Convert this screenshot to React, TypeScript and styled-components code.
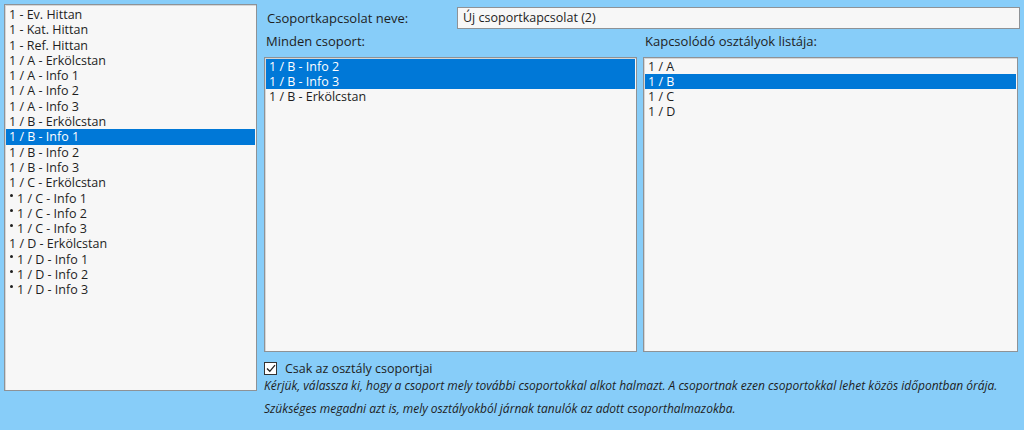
import styled, { createGlobalStyle } from 'styled-components'

const GlobalStyle = createGlobalStyle`
    html, body {
        margin: 0;
        padding: 0;
        background: #87cdf9;
    }
    body {
        font-family: 'Open Sans', 'Noto Sans', sans-serif;
        color: #1e1e1e;
    }
`

const Window = styled.div`
    width: 1024px;
    height: 430px;
    box-sizing: border-box;
    padding: 4px 4px 0 4px;
    display: flex;
    gap: 7px;
    background: #87cdf9;
    overflow: hidden;
`

const ListBox = styled.div<{ $rowHeight: number }>`
    box-sizing: border-box;
    background: #f7f7f7;
    border: 1px solid #8e9296;
    box-shadow: inset 1px 1px 0 #d6d6d6;
    padding: 2px 1px;
    overflow: hidden;
    font-size: 12.5px;
    line-height: ${(p) => p.$rowHeight}px;
`

const SideList = styled(ListBox)`
    width: 253px;
    height: 387px;
    flex: none;
`

const Row = styled.div<{ $selected?: boolean }>`
    padding-left: 3px;
    white-space: nowrap;
    background: ${(p) => (p.$selected ? '#0078d7' : 'transparent')};
    color: ${(p) => (p.$selected ? '#ffffff' : '#1e1e1e')};
`

const Bullet = styled.span`
    display: inline-block;
    width: 3px;
    height: 3px;
    border-radius: 50%;
    background: #1e1e1e;
    margin: 0 4px 0 1px;
    vertical-align: 6px;
`

const Main = styled.div`
    flex: 1;
    display: flex;
    flex-direction: column;
    padding-top: 3px;
`

const NameRow = styled.div`
    display: flex;
    align-items: center;
    padding-left: 3px;
    height: 22px;
`

const Label = styled.div`
    font-size: 13px;
    color: #1e1e1e;
    white-space: nowrap;
`

const NameLabel = styled(Label)`
    width: 190px;
`

const NameInput = styled.div`
    flex: 1;
    height: 22px;
    box-sizing: border-box;
    background: #f7f7f7;
    border: 1px solid #8e9296;
    padding: 0 5px;
    font-size: 12.5px;
    line-height: 20px;
`

const Columns = styled.div`
    display: grid;
    grid-template-columns: 373px 375px;
    column-gap: 6px;
    margin-top: 2px;
`

const Column = styled.div`
    display: flex;
    flex-direction: column;
`

const ColumnLabel = styled(Label)`
    height: 20px;
    line-height: 20px;
    padding-left: 2px;
    margin-bottom: 6px;
`

const PickList = styled(ListBox)`
    height: 295px;
    padding: 1px 1px;
`

const CheckRow = styled.label`
    display: flex;
    align-items: center;
    gap: 8px;
    margin-top: 9px;
    padding-left: 0;
    font-size: 12.5px;
    height: 14px;
`

const CheckBox = styled.span`
    width: 11px;
    height: 11px;
    border: 1px solid #333;
    background: #ffffff;
    display: flex;
    align-items: center;
    justify-content: center;
`

const Help = styled.div`
    margin-top: -1px;
    font-size: 12px;
    font-style: italic;
    line-height: 23px;
    color: #1e1e1e;
    white-space: nowrap;
`

const groups = [
    { text: '1 - Ev. Hittan' },
    { text: '1 - Kat. Hittan' },
    { text: '1 - Ref. Hittan' },
    { text: '1 / A - Erkölcstan' },
    { text: '1 / A - Info 1' },
    { text: '1 / A - Info 2' },
    { text: '1 / A - Info 3' },
    { text: '1 / B - Erkölcstan' },
    { text: '1 / B - Info 1', selected: true },
    { text: '1 / B - Info 2' },
    { text: '1 / B - Info 3' },
    { text: '1 / C - Erkölcstan' },
    { text: '1 / C - Info 1', bullet: true },
    { text: '1 / C - Info 2', bullet: true },
    { text: '1 / C - Info 3', bullet: true },
    { text: '1 / D - Erkölcstan' },
    { text: '1 / D - Info 1', bullet: true },
    { text: '1 / D - Info 2', bullet: true },
    { text: '1 / D - Info 3', bullet: true },
]

const allGroups = [
    { text: '1 / B - Info 2', selected: true },
    { text: '1 / B - Info 3', selected: true },
    { text: '1 / B - Erkölcstan' },
]

const classes = [
    { text: '1 / A' },
    { text: '1 / B', selected: true },
    { text: '1 / C' },
    { text: '1 / D' },
]

function App() {
    return (
        <>
            <GlobalStyle />
            <Window>
                <SideList $rowHeight={15.3}>
                    {groups.map((g) => (
                        <Row key={g.text} $selected={g.selected}>
                            {g.bullet && <Bullet />}
                            {g.text}
                        </Row>
                    ))}
                </SideList>
                <Main>
                    <NameRow>
                        <NameLabel>Csoportkapcsolat neve:</NameLabel>
                        <NameInput>Új csoportkapcsolat (2)</NameInput>
                    </NameRow>
                    <Columns>
                        <Column>
                            <ColumnLabel>Minden csoport:</ColumnLabel>
                            <PickList $rowHeight={15}>
                                {allGroups.map((g) => (
                                    <Row key={g.text} $selected={g.selected}>
                                        {g.text}
                                    </Row>
                                ))}
                            </PickList>
                        </Column>
                        <Column>
                            <ColumnLabel>Kapcsolódó osztályok listája:</ColumnLabel>
                            <PickList $rowHeight={15}>
                                {classes.map((c) => (
                                    <Row key={c.text} $selected={c.selected}>
                                        {c.text}
                                    </Row>
                                ))}
                            </PickList>
                        </Column>
                    </Columns>
                    <CheckRow>
                        <CheckBox>
                            <svg width="10" height="9" viewBox="0 0 10 9">
                                <path d="M1 4.5 L3.8 7.3 L9 1.2" fill="none" stroke="#222" strokeWidth="1.3" />
                            </svg>
                        </CheckBox>
                        Csak az osztály csoportjai
                    </CheckRow>
                    <Help>
                        Kérjük, válassza ki, hogy a csoport mely további csoportokkal alkot halmazt. A csoportnak ezen csoportokkal lehet közös időpontban órája.
                        <br />
                        Szükséges megadni azt is, mely osztályokból járnak tanulók az adott csoporthalmazokba.
                    </Help>
                </Main>
            </Window>
        </>
    )
}

export default App
